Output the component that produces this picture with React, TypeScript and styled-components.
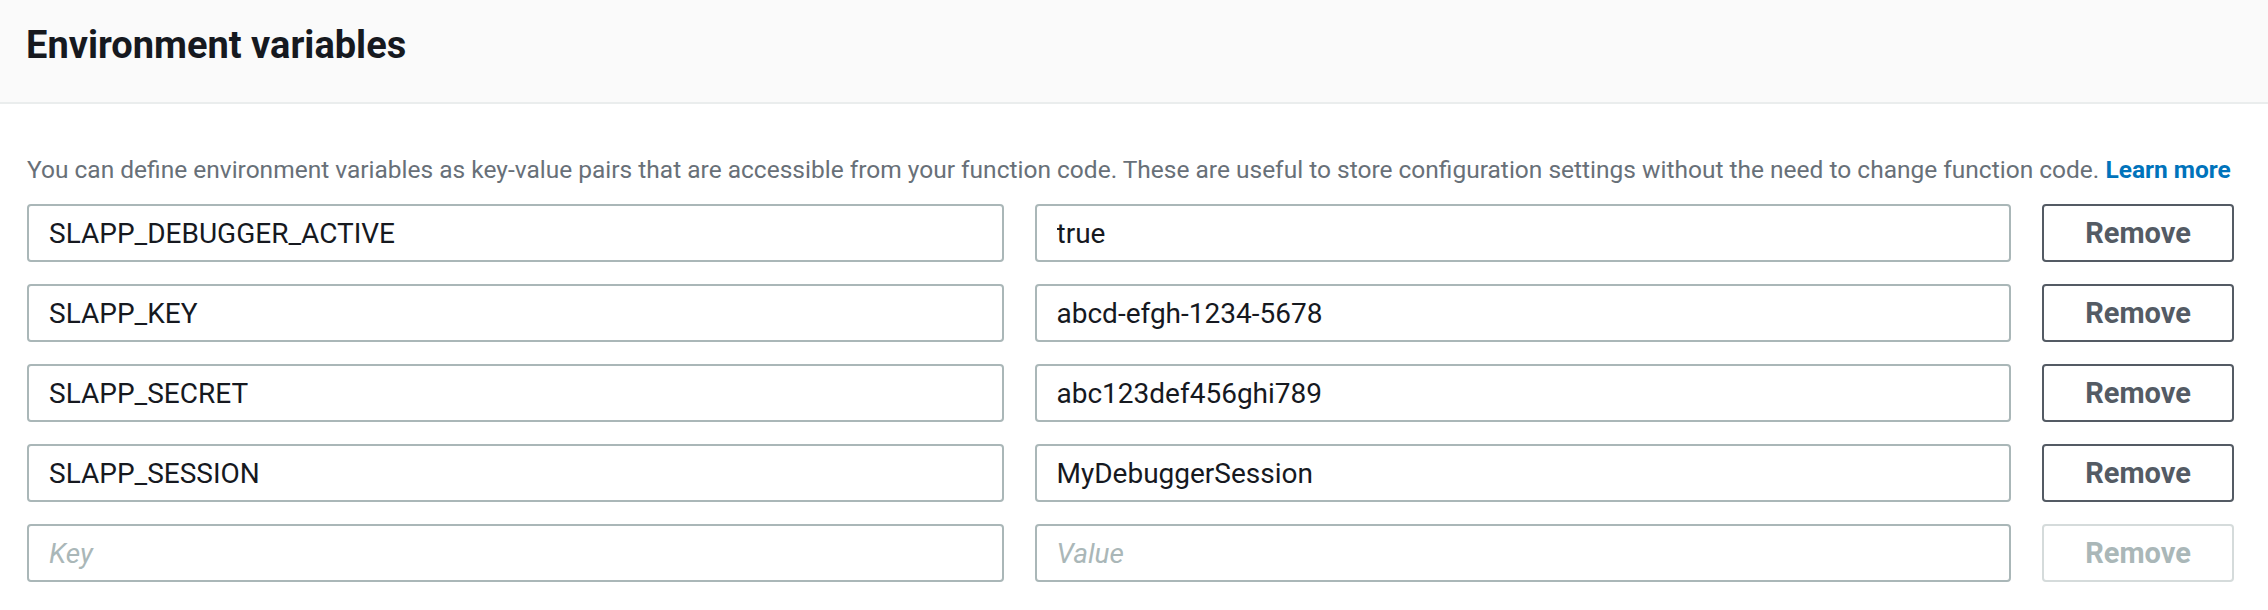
import React from "react";
import styled, { createGlobalStyle } from "styled-components";

const GlobalStyle = createGlobalStyle`
  html, body {
    margin: 0;
    padding: 0;
    background: #ffffff;
  }
  body {
    font-family: Roboto, "Liberation Sans", Arial, sans-serif;
    color: #16191f;
  }
  * { box-sizing: border-box; }
`;

const Panel = styled.section`
  width: 100%;
  background: #ffffff;
`;

const Header = styled.header`
  height: 104px;
  padding: 23px 27px 0 26px;
  background: #fafafa;
  border-bottom: 2px solid #eaeded;
`;

const Title = styled.h2`
  margin: 0;
  font-size: 38px;
  line-height: 44px;
  font-weight: 700;
  color: #16191f;
`;

const Body = styled.div`
  padding: 51px 34px 0 27px;
`;

const Description = styled.p`
  margin: 0 0 19px 0;
  font-size: 24.5px;
  line-height: 30px;
  color: #687078;
  white-space: nowrap;
`;

const Link = styled.a`
  color: #0073bb;
  font-weight: 700;
  text-decoration: none;
`;

const Rows = styled.div`
  display: flex;
  flex-direction: column;
  gap: 22px;
`;

const Row = styled.div`
  display: grid;
  grid-template-columns: 1fr 1fr 192px;
  column-gap: 31px;
`;

const Field = styled.input`
  height: 58px;
  width: 100%;
  padding: 0 20px;
  border: 2px solid #aab7b8;
  border-radius: 4px;
  background: #ffffff;
  font-family: Roboto, "Liberation Sans", Arial, sans-serif;
  font-size: 28px;
  color: #16191f;
  outline: none;

  &::placeholder {
    color: #aab7b8;
    font-style: italic;
  }
`;

const RemoveButton = styled.button<{ $disabled?: boolean }>`
  height: 58px;
  width: 100%;
  padding: 0;
  border: 2px solid ${(p) => (p.$disabled ? "#d5dbdb" : "#545b64")};
  border-radius: 4px;
  background: #ffffff;
  color: ${(p) => (p.$disabled ? "#aab7b8" : "#545b64")};
  font-family: Roboto, "Liberation Sans", Arial, sans-serif;
  font-size: 29px;
  font-weight: 700;
  cursor: ${(p) => (p.$disabled ? "default" : "pointer")};
`;

const vars = [
  { key: "SLAPP_DEBUGGER_ACTIVE", value: "true" },
  { key: "SLAPP_KEY", value: "abcd-efgh-1234-5678" },
  { key: "SLAPP_SECRET", value: "abc123def456ghi789" },
  { key: "SLAPP_SESSION", value: "MyDebuggerSession" },
];

export default function App() {
  return (
    <>
      <GlobalStyle />
      <Panel>
        <Header>
          <Title>Environment variables</Title>
        </Header>
        <Body>
          <Description>
            You can define environment variables as key-value pairs that are accessible from your function code. These are useful to store configuration settings without the need to change function code.{" "}
            <Link href="#">Learn more</Link>
          </Description>
          <Rows>
            {vars.map((v) => (
              <Row key={v.key}>
                <Field defaultValue={v.key} readOnly />
                <Field defaultValue={v.value} readOnly />
                <RemoveButton type="button">Remove</RemoveButton>
              </Row>
            ))}
            <Row>
              <Field placeholder="Key" />
              <Field placeholder="Value" />
              <RemoveButton type="button" $disabled disabled>
                Remove
              </RemoveButton>
            </Row>
          </Rows>
        </Body>
      </Panel>
    </>
  );
}
